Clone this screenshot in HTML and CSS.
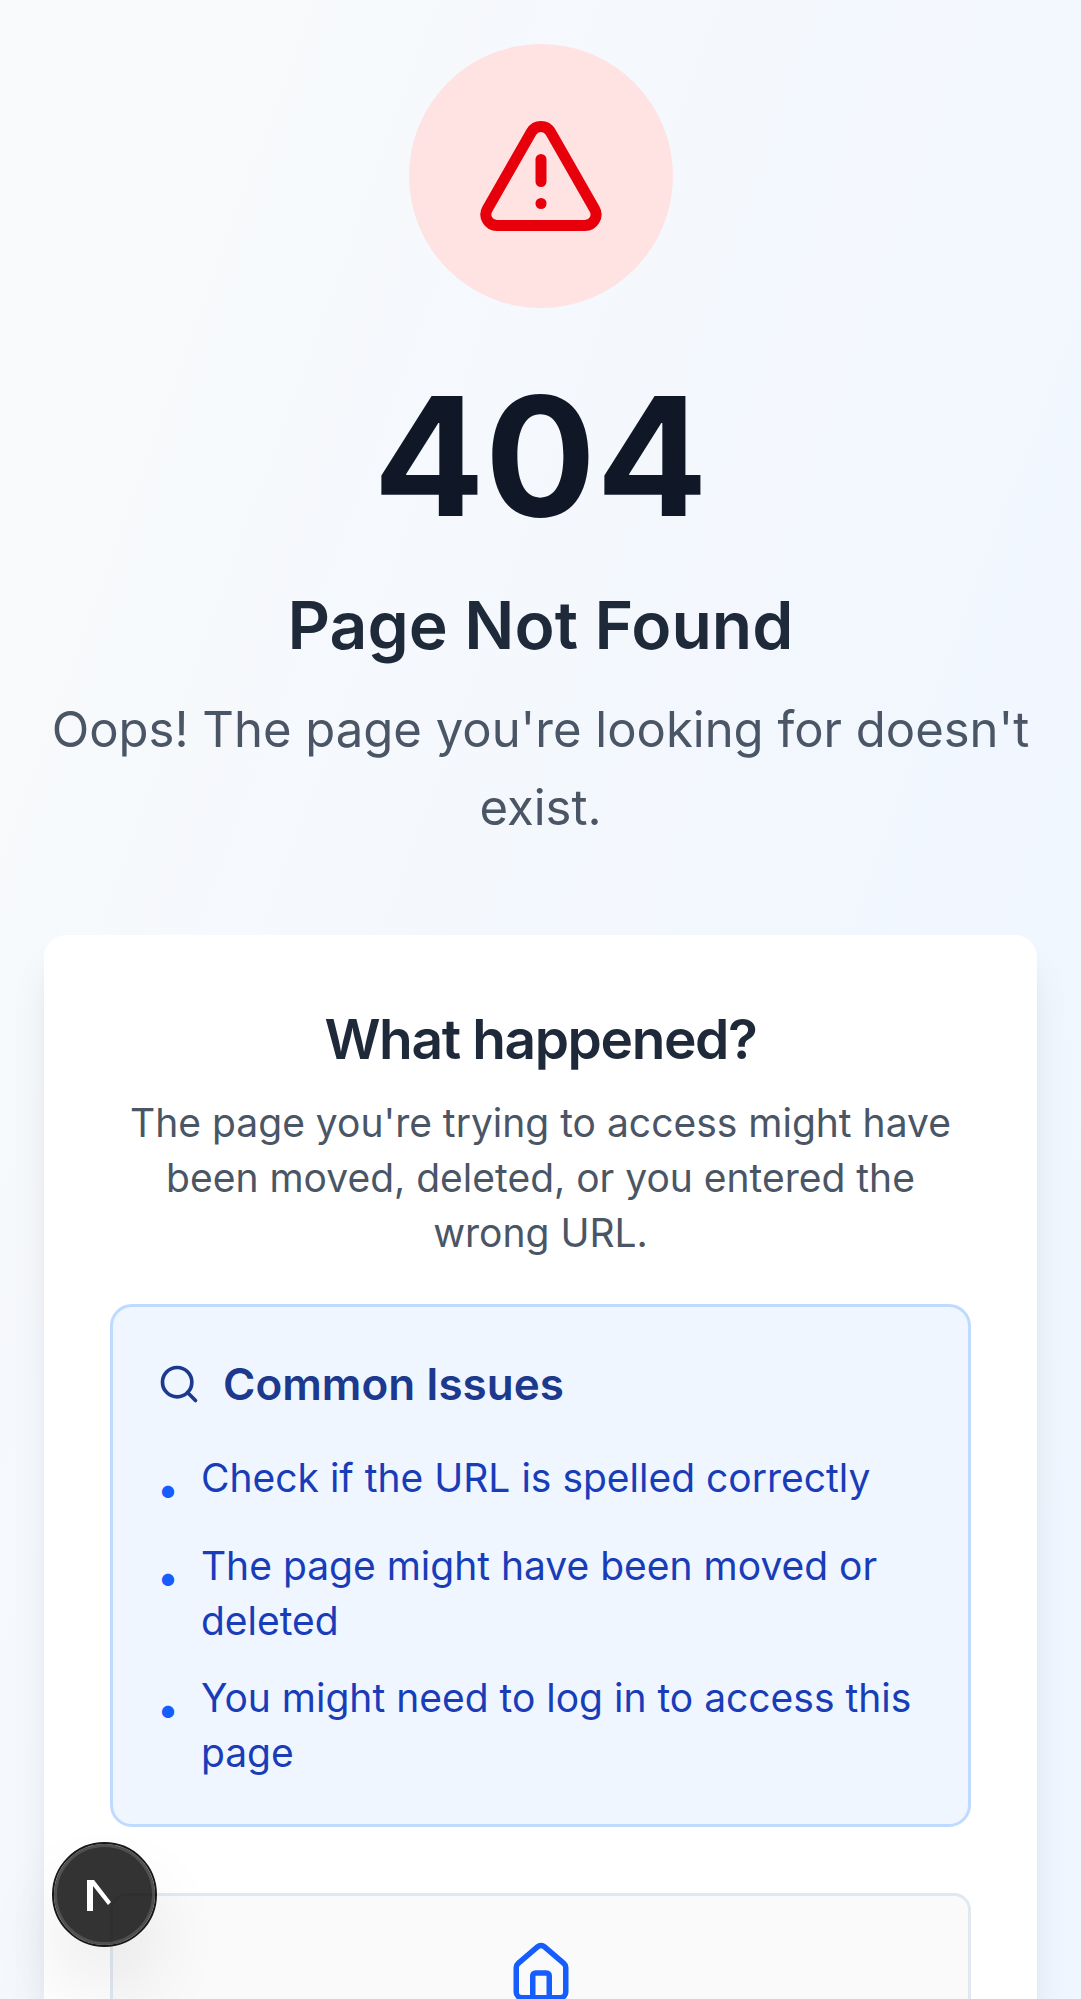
FILE: index.html
```html
<!DOCTYPE html>
<html lang="en">
<head>
  <meta charset="utf-8">
  <meta name="viewport" content="width=device-width, initial-scale=1">
  <title>404 - Page Not Found</title>
  <link rel="stylesheet" href="styles.css">
</head>
<body>
  <main class="page">
    <header class="hero">
      <div class="hero-badge">
        <svg class="hero-icon" viewBox="0 0 24 24" aria-hidden="true">
          <path d="m21.73 18-8-14a2 2 0 0 0-3.48 0l-8 14A2 2 0 0 0 4 21h16a2 2 0 0 0 1.73-3"/>
          <path d="M12 9v4"/>
          <path d="M12 17h.01"/>
        </svg>
      </div>
      <h1 class="hero-code">404</h1>
      <h2 class="hero-title">Page Not Found</h2>
      <p class="hero-text">Oops! The page you're looking for doesn't exist.</p>
    </header>

    <section class="card">
      <div class="card-header">
        <h3 class="card-title">What happened?</h3>
        <p class="card-text">The page you're trying to access might have been moved, deleted, or you entered the wrong URL.</p>
      </div>

      <div class="issues">
        <h4 class="issues-title">
          <svg class="issues-icon" viewBox="0 0 24 24" aria-hidden="true">
            <path d="m21 21-4.34-4.34"/>
            <circle cx="11" cy="11" r="8"/>
          </svg>
          Common Issues
        </h4>
        <ul class="issues-list">
          <li class="issue"><span class="bullet">•</span><span>Check if the URL is spelled correctly</span></li>
          <li class="issue"><span class="bullet">•</span><span>The page might have been moved or deleted</span></li>
          <li class="issue"><span class="bullet">•</span><span>You might need to log in to access this page</span></li>
        </ul>
      </div>

      <a class="home-link" href="/" aria-label="Home">
        <svg class="home-icon" viewBox="0 0 24 24" aria-hidden="true">
          <path d="M15 21v-8a1 1 0 0 0-1-1h-4a1 1 0 0 0-1 1v8"/>
          <path d="M3 10a2 2 0 0 1 .709-1.528l7-5.999a2 2 0 0 1 2.582 0l7 5.999A2 2 0 0 1 21 10v9a2 2 0 0 1-2 2H5a2 2 0 0 1-2-2z"/>
        </svg>
      </a>
    </section>
  </main>

  <button class="dev-button" type="button" aria-label="Open developer tools">
    <svg class="dev-logo" viewBox="0 0 40 40" aria-hidden="true">
      <path d="M7 5h7l17 22-3 3-15-19v25H7z"/>
    </svg>
  </button>
</body>
</html>
```

FILE: styles.css
```css
* {
  box-sizing: border-box;
  margin: 0;
  padding: 0;
}

body {
  font-family: Inter, "Liberation Sans", sans-serif;
  font-variation-settings: "opsz" 14;
  overflow: hidden;
}

svg {
  display: block;
  flex: none;
  fill: none;
  stroke: currentColor;
  stroke-width: 2;
  stroke-linecap: round;
  stroke-linejoin: round;
}

.page {
  height: 100vh;
  overflow: hidden;
  padding: 44px;
  background: linear-gradient(110deg, #f9fafb, #eff6ff 90%);
}

/* Hero */
.hero {
  display: flex;
  flex-direction: column;
  align-items: center;
  text-align: center;
  margin-bottom: 88px;
}

.hero-badge {
  display: flex;
  align-items: center;
  justify-content: center;
  width: 264px;
  height: 264px;
  margin-bottom: 66px;
  border-radius: 50%;
  background: #ffe2e2;
  color: #e7000b;
}

.hero-icon {
  width: 132px;
  height: 132px;
}

.hero-code {
  margin-bottom: 42px;
  font-size: 165px;
  line-height: 165px;
  font-weight: 700;
  font-variation-settings: "opsz" 32;
  color: #101828;
}

.hero-title {
  margin-bottom: 22px;
  font-size: 66px;
  line-height: 88px;
  font-weight: 600;
  font-variation-settings: "opsz" 24;
  color: #1e2939;
}

.hero-text {
  font-size: 49px;
  line-height: 78px;
  font-variation-settings: "opsz" 18;
  color: #4a5565;
}

/* Card */
.card {
  padding: 66px;
  border-radius: 22px;
  background: #fff;
  box-shadow: 0 28px 41px -8px rgb(0 0 0 / 10%), 0 11px 17px -11px rgb(0 0 0 / 10%);
}

.card-header {
  margin-bottom: 44px;
  text-align: center;
}

.card-title {
  margin-bottom: 17px;
  font-size: 55px;
  line-height: 77px;
  font-weight: 600;
  font-variation-settings: "opsz" 20;
  letter-spacing: -0.025em;
  color: #1e2939;
}

.card-text {
  font-size: 39px;
  line-height: 55px;
  color: #4a5565;
}

/* Common issues */
.issues {
  margin-bottom: 66px;
  padding: 44px;
  border: 3px solid #bedbff;
  border-radius: 22px;
  background: #eff6ff;
}

.issues-title {
  display: flex;
  align-items: center;
  gap: 22px;
  margin-bottom: 33px;
  font-size: 44px;
  line-height: 66px;
  font-weight: 600;
  color: #1c398e;
}

.issues-icon {
  width: 44px;
  height: 44px;
}

.issues-list {
  display: flex;
  flex-direction: column;
  gap: 22px;
  list-style: none;
  font-size: 39px;
  line-height: 55px;
  color: #193cb8;
}

.issue {
  display: flex;
  align-items: flex-start;
  gap: 22px;
}

.bullet {
  margin-top: 11px;
  color: #155dfc;
}

/* Home tile */
.home-link {
  display: flex;
  flex-direction: column;
  align-items: center;
  padding: 44px;
  border: 3px solid #e2e8f0;
  border-radius: 17px;
  background: #fafafa;
  color: #155dfc;
}

.home-icon {
  width: 66px;
  height: 66px;
}

/* Floating developer button */
.dev-button {
  position: fixed;
  left: 52px;
  bottom: 52px;
  display: flex;
  align-items: center;
  width: 105px;
  height: 105px;
  padding-left: 26px;
  border: 2px solid #171717;
  border-radius: 50%;
  background: rgb(0 0 0 / 80%);
  background-clip: padding-box;
  box-shadow: inset 0 0 0 3px rgb(255 255 255 / 14%), 0 44px 88px -22px rgb(0 0 0 / 24%);
  color: #fff;
}

.dev-logo {
  width: 40px;
  height: 40px;
  fill: currentColor;
  stroke: none;
}
```
